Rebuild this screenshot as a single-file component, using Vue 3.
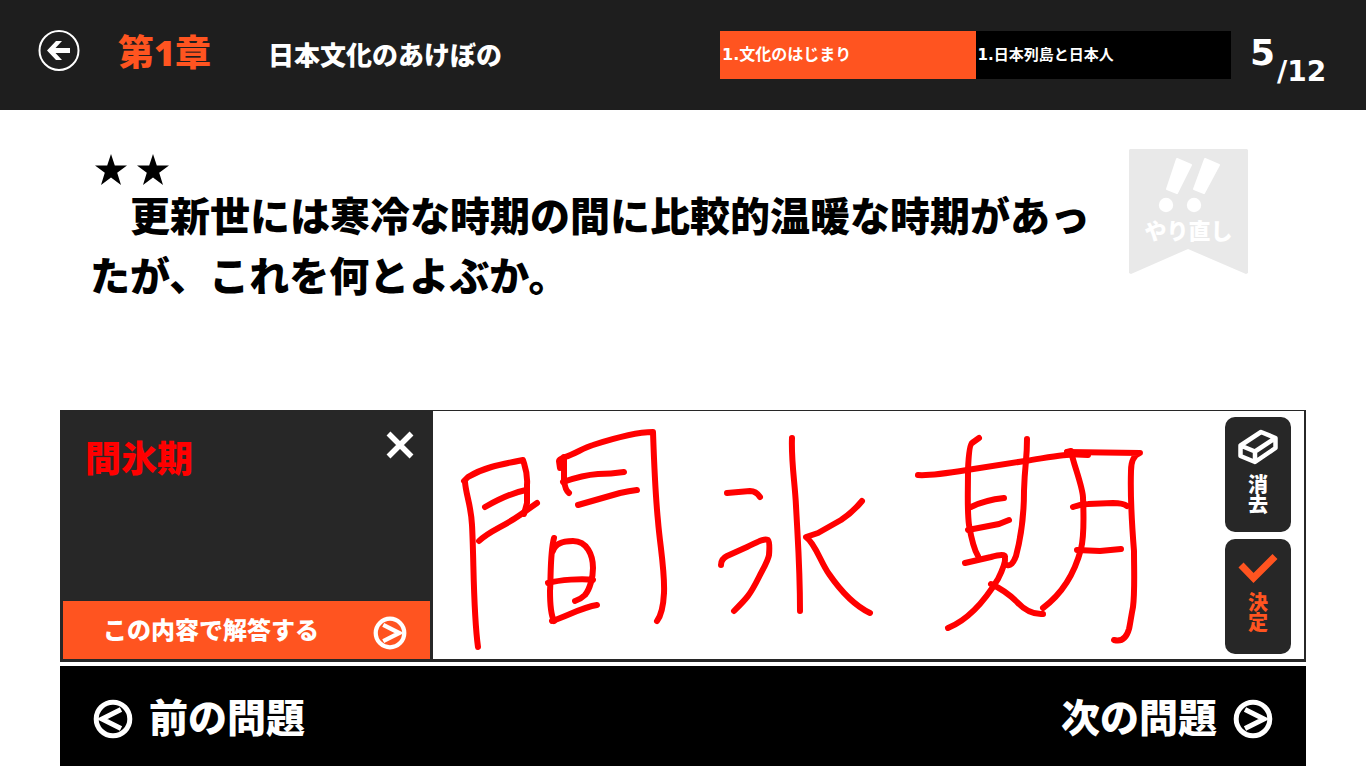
<template>
  <div class="page">
    <header class="header">
      <button type="button" class="back" aria-label="戻る">
        <svg width="42" height="42" viewBox="0 0 42 42">
          <circle cx="21" cy="21.5" r="19.5" fill="none" stroke="#fff" stroke-width="2" />
          <path d="M9 21.5 L18 12 H24 L17.5 19 H32 V24 H17.5 L24 31 H18 Z" fill="#fff" />
        </svg>
      </button>
      <h1 class="chapter">第1章</h1>
      <p class="chapter-title">日本文化のあけぼの</p>
      <nav class="tabs">
        <a href="#section" class="tab tab-active">1.文化のはじまり</a>
        <a href="#topic" class="tab">1.日本列島と日本人</a>
      </nav>
      <div class="counter">
        <span class="current">{{ current }}</span>
        <span class="total">/{{ total }}</span>
      </div>
    </header>

    <main class="main">
      <section class="question">
        <div class="question-body">
          <div class="stars" role="img" aria-label="難易度2">
            <svg v-for="n in level" :key="n" width="32" height="32" viewBox="0 0 32 32">
              <path d="M16 0 L19.8 11.5 H32 L22.2 18.8 L26 31 L16 23.6 L6 31 L9.8 18.8 L0 11.5 H12.2 Z" />
            </svg>
          </div>
          <p class="question-text">&#12288;{{ question }}</p>
        </div>
        <button type="button" class="ribbon">
          <svg class="ribbon-shape" width="119" height="125" viewBox="0 0 119 125">
            <path d="M1 0 H118 L119 1 V124 L117 125 L59 100 L2 125 L0 124 V1 Z" fill="#e9e9e9" />
            <g fill="#fff" stroke="#fff" stroke-width="2" stroke-linejoin="round">
              <path d="M48 10 L62 16 L48 44 L38 40 Z" />
              <path d="M76 10 L90 16 L75 44 L65 40 Z" />
            </g>
            <circle cx="37" cy="56" r="7.2" fill="#fff" />
            <circle cx="65" cy="56" r="7.2" fill="#fff" />
          </svg>
          <span class="ribbon-label">やり直し</span>
        </button>
      </section>

      <section class="answer">
        <div class="answer-side">
          <div class="recognized">
            <p class="recognized-text">{{ answer }}</p>
            <button type="button" class="clear" aria-label="取り消し">
              <svg width="28" height="28" viewBox="0 0 28 28">
                <path d="M2.500 2.500 L25.500 25.500 M25.500 2.500 L2.500 25.500" stroke="#fff" stroke-width="5.500" />
              </svg>
            </button>
          </div>
          <button type="button" class="submit">
            <span class="button-text">この内容で解答する</span>
            <svg width="34" height="34" viewBox="0 0 40 40" class="round-icon">
              <circle cx="20" cy="20" r="16.8" />
              <path d="M12 10.500 L31 20 L12 29.500" />
            </svg>
          </button>
        </div>
        <div class="pad">
          <svg class="ink" viewBox="0 0 780 248" preserveAspectRatio="xMinYMin meet">
            <path v-for="(d, i) in strokes" :key="i" :d="d" />
          </svg>
          <div class="tools">
            <button type="button" class="tool">
              <svg width="42" height="38" viewBox="0 0 42 38">
                <path
                  d="M3.500 17.500 L24 4 L38.500 10 V20 L18 34 L3.500 28 Z M3.500 17.500 L18 23.500 L38.500 10 M18 23.500 V34"
                  fill="none" stroke="#fff" stroke-width="4.500" stroke-linejoin="round"
                />
              </svg>
              <span class="tool-label">消去</span>
            </button>
            <button type="button" class="tool tool-ok">
              <svg width="42" height="38" viewBox="0 0 42 38">
                <path d="M4 15 L16.500 28 L38 6.500" fill="none" stroke="#ff5420" stroke-width="7" />
              </svg>
              <span class="tool-label">決定</span>
            </button>
          </div>
        </div>
      </section>

      <footer class="pager">
        <button type="button" class="page-button">
          <svg width="40" height="40" viewBox="0 0 40 40" class="round-icon">
            <circle cx="20" cy="20" r="16.8" />
            <path d="M28 10.500 L9 20 L28 29.500" />
          </svg>
          <span class="button-text">前の問題</span>
        </button>
        <button type="button" class="page-button">
          <span class="button-text">次の問題</span>
          <svg width="40" height="40" viewBox="0 0 40 40" class="round-icon">
            <circle cx="20" cy="20" r="16.8" />
            <path d="M12 10.500 L31 20 L12 29.500" />
          </svg>
        </button>
      </footer>
    </main>
  </div>
</template>

<script setup>
import { ref } from 'vue'

const current = ref(5)
const total = ref(12)
const level = ref(2)
const question = ref('更新世には寒冷な時期の間に比較的温暖な時期があったが、これを何とよぶか。')
const answer = ref('間氷期')

const strokes = ref([
  // 間
  'M32 71 C33 84 38 94 39 114 C41 150 40 200 45 236',
  'M31 70 L35 66 C50 57 64 54 90 49 C92 56 95 62 94 74 L94 92 L91 103',
  'M52 96 C66 88 78 82 93 79',
  'M46 130 C56 120 70 116 87 104 L104 92',
  'M127 57 L126 50 Q126 48 132 46 C142 43 150 37 160 34 Q200 21 220 21 C221 50 222 80 225 110 C227 135 232 160 231 182 Q230 202 224 210',
  'M131 46 L131 69 Q132 79 136 82',
  'M130 71 Q150 64 165 63 Q178 63 191 61',
  'M145 94 L187 82 Q196 80 204 79',
  'M121 127 C117 142 118 165 117 180 Q117 202 121 210',
  'M120 140 C122 133 130 130 140 130 C154 130 160 144 160 157 C160 166 157 178 152 184 Q148 188 142 190',
  'M115 172 C126 169 150 167 160 169',
  'M119 210 C134 205 150 196 164 194',
  // 氷
  'M359 27 C358 50 362 72 363 95 C366 150 367 160 367 200',
  'M294 82 L317 80 Q323 80 327 86',
  'M288 154 Q288 148 294 145 L314 136 C323 132 330 127 335 129 Q337 131 336 144 C335 150 330 158 326 166 C317 184 314 187 301 200',
  'M429 90 Q420 101 408 109 L385 122 L373 126 C382 132 388 152 396 163 Q416 192 437 202',
  // 期
  'M485 64 Q497 65 534 59 L592 50 C614 47 630 42 655 44',
  'M546 27 L539 32 Q536 34 535 59 C535 85 534 98 536 114 Q540 137 545 145',
  'M594 28 C594 50 592 50 591 80 C591 106 587 130 583 145 Q579 156 574 154',
  'M538 96 Q552 89 571 87',
  'M535 119 L566 113 L576 109',
  'M532 152 L558 146 Q572 142 572 146 Q573 152 565 168 Q542 206 515 217',
  'M558 173 C569 178 576 183 584 191 Q596 204 610 203',
  'M634 41 L638 40 C640 52 650 76 650 87 C651 110 651 126 648 138 Q638 176 610 197',
  'M634 41 L707 42 Q698 45 698 60 C697 90 699 115 701 140 C701 160 702 180 700 196 C698 206 697 214 696 218 Q692 232 681 229',
  'M640 96 Q648 93 655 93 L680 92 Q690 92 694 95',
  'M644 139 L667 140 L688 138'
])
</script>

<style>
body {
  background: #fff;
}
</style>

<style scoped>
.page {
  font-family: 'Noto Sans CJK JP', sans-serif;
  font-weight: 900;
  color: #000;
}

.page h1,
.page p {
  margin: 0;
}

button {
  border: 0;
  padding: 0;
  background: none;
  color: inherit;
  font: inherit;
  cursor: pointer;
}

svg {
  display: block;
  flex-shrink: 0;
}

.header {
  display: flex;
  align-items: flex-start;
  height: 110px;
  padding: 0 36px 0 38px;
  box-sizing: border-box;
  background: #1e1e1e;
  color: #fff;
}

.back {
  margin-top: 29px;
}

.chapter {
  width: 150px;
  padding-top: 33px;
  padding-left: 38px;
  font-family: 'Noto Sans', 'Noto Sans CJK JP', sans-serif;
  font-size: 36px;
  font-weight: 900;
  line-height: 40px;
  color: #ff5420;
  white-space: nowrap;
}

.chapter-title {
  padding-top: 34px;
  font-size: 26px;
  line-height: 40px;
  white-space: nowrap;
}

.tabs {
  display: flex;
  width: 511px;
  margin-top: 31px;
  margin-left: auto;
}

.tab {
  flex: 1;
  height: 48px;
  padding-left: 2px;
  box-sizing: border-box;
  background: #000;
  color: #fff;
  font-family: 'DejaVu Sans', 'Noto Sans CJK JP', sans-serif;
  font-size: 15px;
  font-weight: 700;
  line-height: 48px;
  text-decoration: none;
  white-space: nowrap;
}

.tab-active {
  background: #ff5420;
  font-size: 16px;
}

.counter {
  display: flex;
  align-items: flex-start;
  gap: 2px;
  width: 80px;
  margin-left: 19px;
  font-family: 'DejaVu Sans', sans-serif;
  font-weight: 700;
}

.current {
  padding-top: 33px;
  font-size: 36px;
  line-height: 40px;
}

.total {
  padding-top: 52px;
  font-size: 28px;
  line-height: 40px;
}

.main {
  padding: 0 60px 2px;
}

.question {
  display: flex;
  justify-content: space-between;
  min-height: 300px;
  padding: 39px 58px 0 30px;
  box-sizing: border-box;
}

.question-body {
  width: 1004px;
}

.stars {
  display: flex;
  gap: 10px;
  height: 30px;
  padding: 5px 0 0 5px;
}

.question-text {
  font-size: 40px;
  line-height: 60px;
}

.ribbon {
  position: relative;
  align-self: flex-start;
  color: #fff;
}

.ribbon-label {
  position: absolute;
  top: 66px;
  right: 0;
  left: 0;
  font-size: 22px;
  line-height: 28px;
}

.answer {
  display: flex;
  border: solid #272727;
  border-width: 1px 2px 3px 3px;
}

.answer-side {
  display: flex;
  flex-direction: column;
  width: 367px;
  border-right: 3px solid #272727;
  background: #272727;
}

.recognized {
  display: flex;
  flex: 1;
  align-items: flex-start;
  justify-content: space-between;
  padding: 20px 16px 0 22px;
}

.recognized-text {
  padding-top: 5px;
  font-size: 36px;
  line-height: 40px;
  color: #f00;
}

.submit {
  display: flex;
  align-items: center;
  justify-content: space-between;
  height: 58px;
  padding: 5px 23px 0 40px;
  background: #ff5420;
  color: #fff;
  font-size: 24px;
}

.button-text {
  padding-bottom: 8px;
}

.round-icon {
  fill: none;
  stroke: #fff;
  stroke-width: 5;
}

.pad {
  display: flex;
  flex: 1;
  justify-content: space-between;
  background: #fff;
}

.ink {
  width: 780px;
  height: 248px;
  fill: none;
  stroke: #f00;
  stroke-width: 6;
  stroke-linecap: round;
  stroke-linejoin: round;
}

.tools {
  display: flex;
  flex-direction: column;
  gap: 7px;
  padding: 6px 13px 5px 0;
}

.tool {
  display: flex;
  flex-direction: column;
  align-items: center;
  width: 66px;
  height: 115px;
  padding-top: 11px;
  border-radius: 10px;
  background: #272727;
  color: #fff;
}

.tool-ok {
  color: #ff5420;
}

.tool-label {
  width: 20px;
  margin-top: 8px;
  font-size: 20px;
  line-height: 20px;
}

.tool-ok .tool-label {
  margin-top: 4px;
}

.pager {
  display: flex;
  align-items: center;
  justify-content: space-between;
  height: 100px;
  margin-top: 4px;
  padding: 5px 33px 0;
  box-sizing: border-box;
  background: #000;
  color: #fff;
}

.page-button {
  display: flex;
  align-items: center;
  gap: 16px;
  font-size: 39px;
  line-height: 56px;
}
</style>
